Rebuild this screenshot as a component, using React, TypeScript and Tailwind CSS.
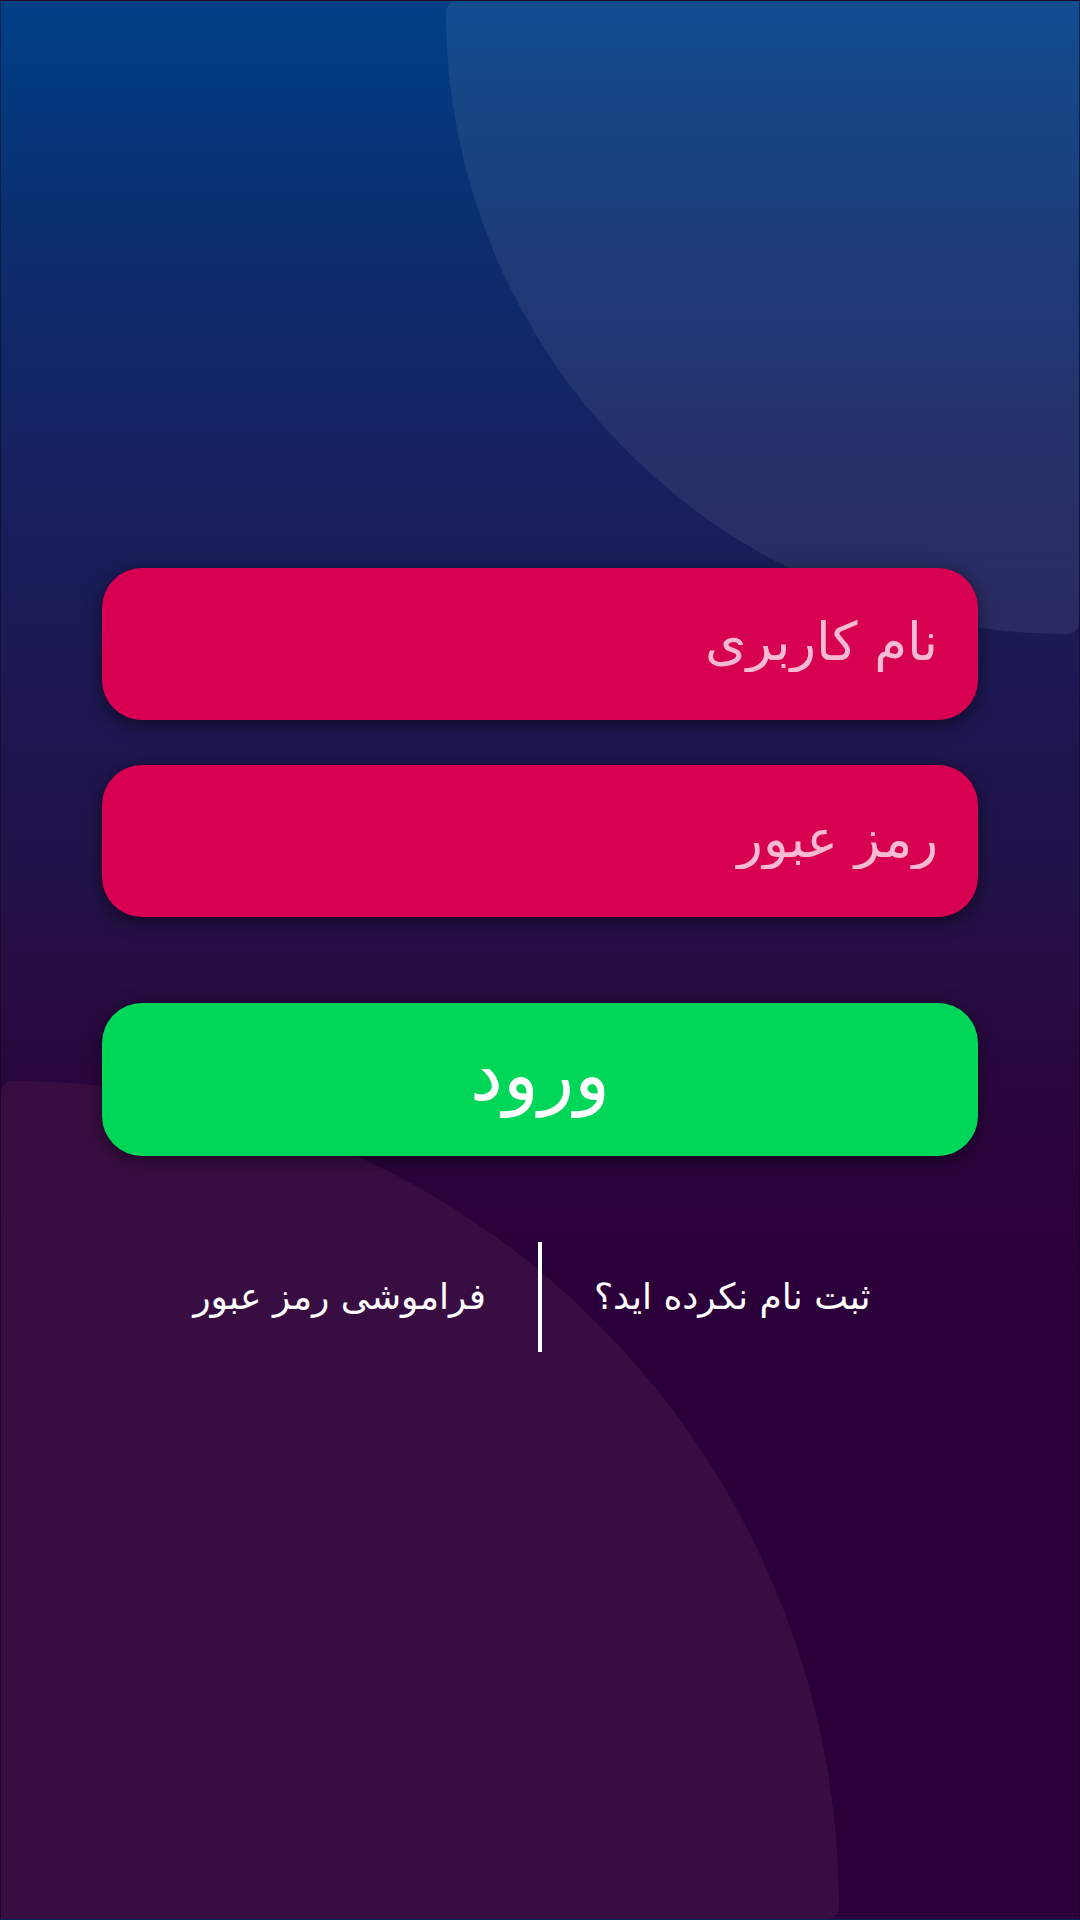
import React from 'react'

const font = "font-['DejaVu_Sans','Noto_Sans',sans-serif]"

function Field({ placeholder, type = 'text' }: { placeholder: string; type?: string }) {
  return (
    <input
      type={type}
      dir="rtl"
      placeholder={placeholder}
      className={`h-[152px] w-full rounded-[40px] bg-[#d80051] px-[40px] pb-[6px] text-[53px] text-white outline-none shadow-[0_4px_18px_rgba(0,0,0,0.55)] placeholder:text-[#f7bad2] ${font}`}
    />
  )
}

export default function App() {
  return (
    <div
      dir="rtl"
      className={`relative h-[1920px] w-[1080px] overflow-hidden border border-black/40 bg-[linear-gradient(180deg,#004087_0%,#0b2e6f_12%,#17205e_25%,#1d1853_36%,#221248_46%,#2a063e_56%,#2b003a_66%,#2b003a_100%)] ${font}`}
    >
      {/* decorative shapes */}
      <div className="absolute right-0 top-0 h-[633px] w-[633px] rounded-bl-[633px] rounded-br-[12px] rounded-tl-[12px] bg-white/[0.07]" />
      <div className="absolute bottom-0 left-0 h-[838px] w-[838px] rounded-tr-[838px] rounded-br-[12px] rounded-tl-[12px] bg-[#380e42]" />

      <div className="relative flex flex-col px-[101px] pt-[567px]">
        <Field placeholder="نام کاربری" />
        <div className="mt-[45px]">
          <Field placeholder="رمز عبور" type="password" />
        </div>
        <button
          type="button"
          className="mt-[86px] flex h-[153px] w-full items-center justify-center rounded-[40px] bg-[#00d658] pb-[10px] text-[74px] text-white shadow-[0_4px_18px_rgba(0,0,0,0.5)]"
        >
          ورود
        </button>

        <div className="mt-[86px] flex items-center gap-[52px] text-[36px] text-white">
          <div className="flex flex-1 justify-end">
            <span>ثبت نام نکرده اید؟</span>
          </div>
          <span className="h-[110px] w-[4px] bg-white" />
          <div className="flex flex-1 justify-start">
            <span>فراموشی رمز عبور</span>
          </div>
        </div>
      </div>
    </div>
  )
}
